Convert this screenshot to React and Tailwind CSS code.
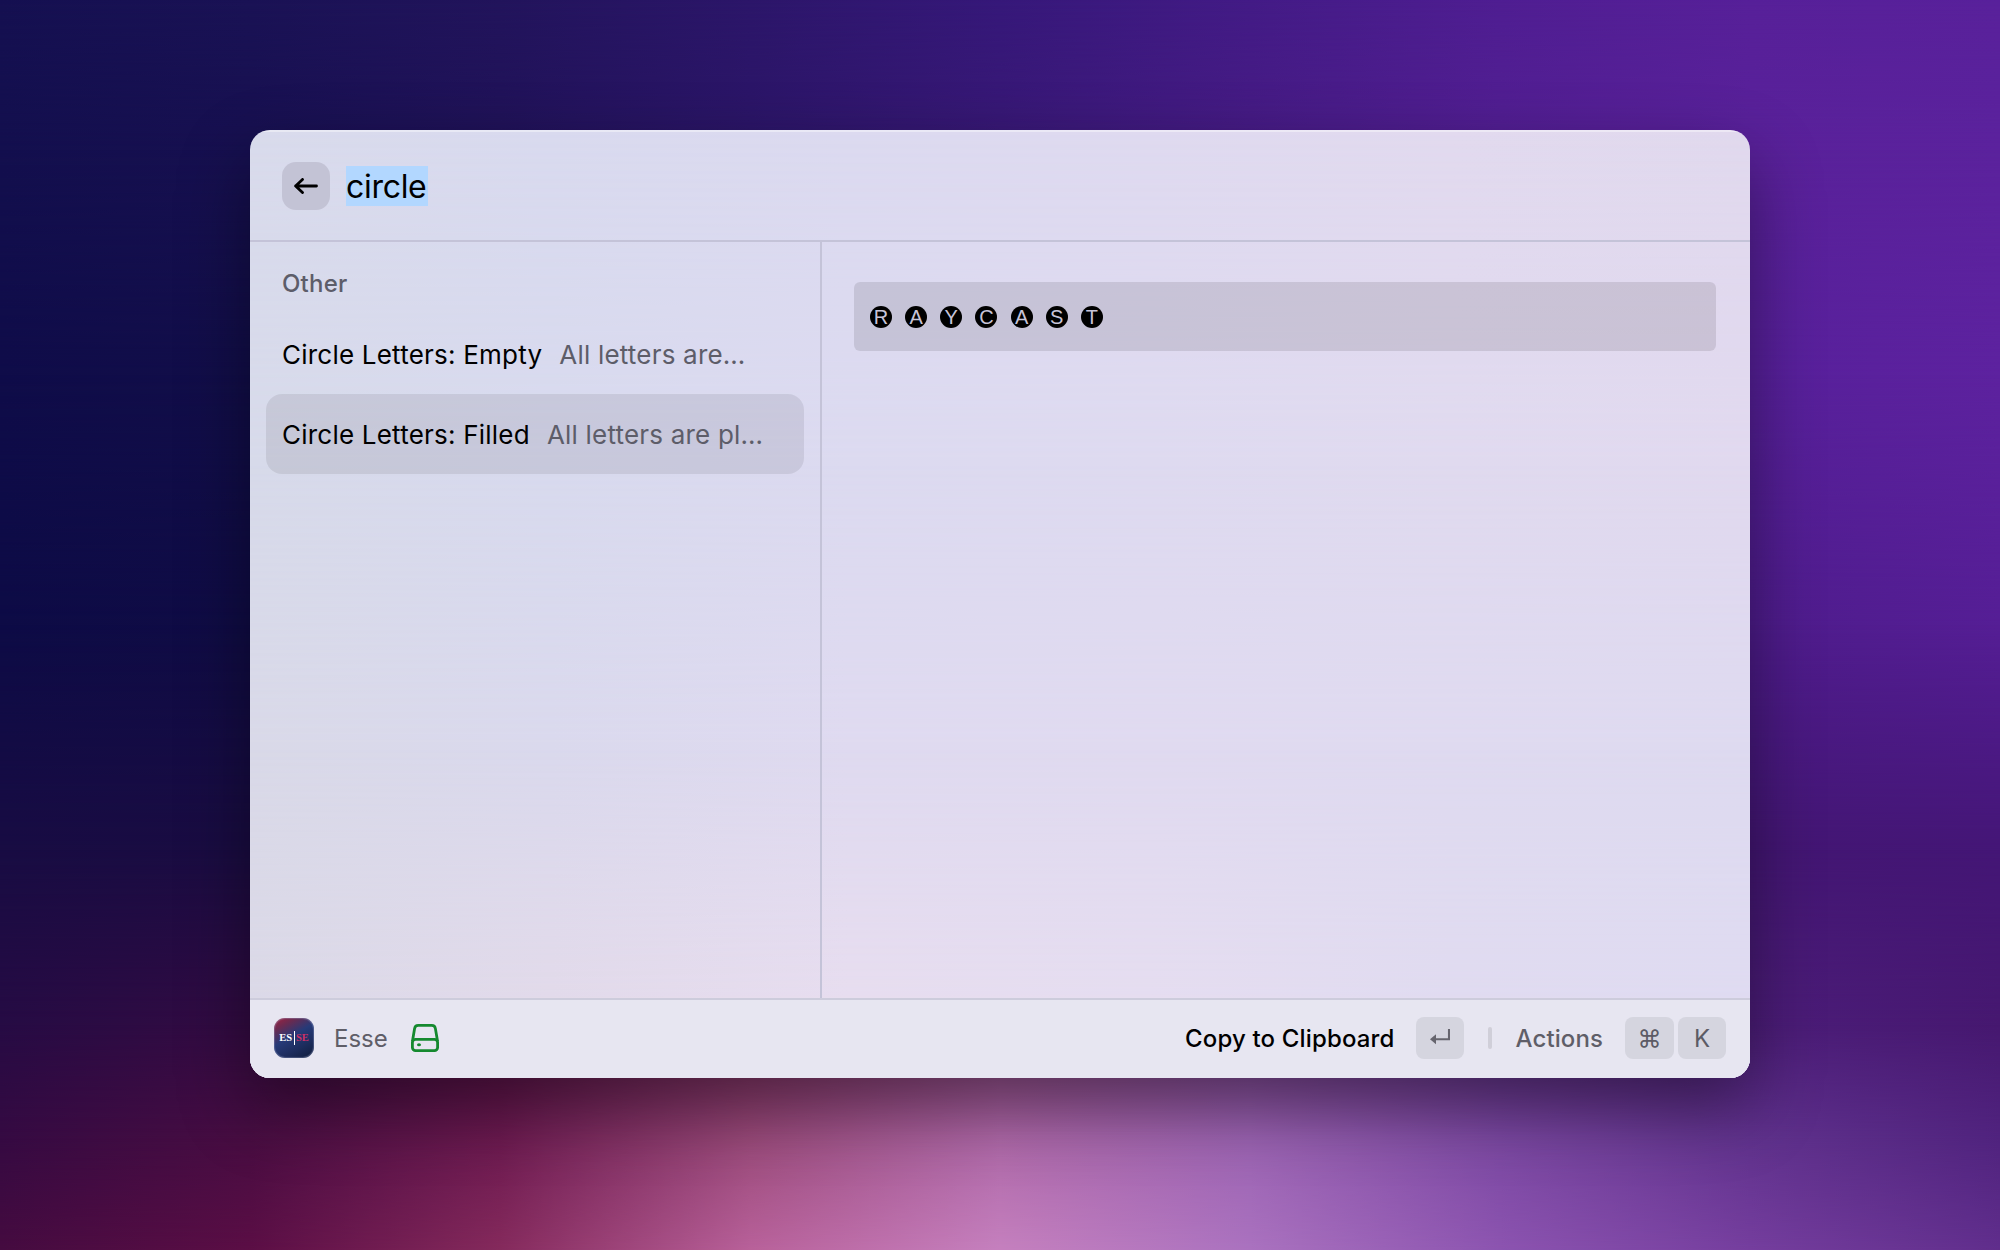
const FIELD_X = [0, 12.5, 25, 37.5, 50, 62.5, 75, 87.5, 100];

const FIELD = [
  { y: 0, c: ["#151051", "#1a1255", "#22145c", "#2c166a", "#36187a", "#431b86", "#4f1e92", "#572099", "#59219b"] },
  { y: 12, c: ["#130f4e", "#171050", "#201258", "#2b1567", "#381875", "#461b84", "#521e92", "#59219a", "#5b229d"] },
  { y: 30, c: ["#0f0c49", "#120e49", "#1b1050", "#27135f", "#36166e", "#441a7e", "#501d8d", "#57209b", "#5d229f"] },
  { y: 50, c: ["#0d0b46", "#100c45", "#180c48", "#251055", "#351464", "#3f1674", "#481980", "#4e1c8c", "#551e95"] },
  { y: 68, c: ["#180c43", "#1a0c42", "#280c45", "#3c1050", "#4a1460", "#4c1870", "#481878", "#431673", "#441676"] },
  { y: 82, c: ["#260b44", "#330b42", "#551048", "#7a2a60", "#8a4280", "#7a3f90", "#5c2a86", "#4c1d79", "#461870"] },
  { y: 91, c: ["#350a42", "#480d42", "#6c1a50", "#9a4a7a", "#ae68a8", "#9b63b2", "#7b48a2", "#60328d", "#50237e"] },
  { y: 100, c: ["#450b40", "#5b0e45", "#852a5c", "#b8619a", "#c580be", "#aa72bf", "#8c54b0", "#753e9e", "#602e8c"] },
];

const TINT_X = [0, 20, 40, 60, 80, 100];
const TINT = [
  { y: 0, c: ["#d9dbec", "#d9daef", "#dcdaf0", "#dfdaf0", "#e2daef", "#e1d9ee"] },
  { y: 35, c: ["#d7daea", "#d8daee", "#dcdaf0", "#dedaf0", "#e0daef", "#e1d9ef"] },
  { y: 65, c: ["#d9d9e8", "#dad9ed", "#dfdaf0", "#e0daf0", "#dfdaf0", "#dedaf0"] },
  { y: 92, c: ["#dbd9e7", "#e2daea", "#e7ddef", "#e5ddf0", "#e0dbf0", "#dfdbf1"] },
];

function Mesh({ xs, rows }) {
  return rows.map((row, i) => {
    const fade = i ? `linear-gradient(to bottom, transparent ${rows[i - 1].y}%, black ${row.y}%)` : "none";
    return (
      <div
        key={row.y}
        className="absolute inset-0"
        style={{
          backgroundImage: `linear-gradient(to right, ${row.c.map((c, k) => `${c} ${xs[k]}%`).join(", ")})`,
          maskImage: fade,
        }}
      />
    );
  });
}

function ArrowLeft() {
  return (
    <svg width="24" height="16" viewBox="0 0 24 16" fill="none" stroke="black" strokeWidth="2.8" strokeLinecap="round" strokeLinejoin="round">
      <path d="M22.5 8H1.6M8.5 1.4 1.6 8l6.9 6.6" />
    </svg>
  );
}

function DriveIcon() {
  return (
    <svg width="28" height="28" viewBox="0 0 28 28" fill="none" stroke="#15892f" strokeWidth="2.8" strokeLinejoin="round">
      <path d="M1.4 17.5 3.6 4.6C3.9 2.6 5.3 1.4 7.2 1.4h13.6c1.9 0 3.3 1.2 3.6 3.2l2.2 12.9" />
      <rect x="1.4" y="15.4" width="25.2" height="11.2" rx="3.2" />
      <ellipse cx="8" cy="20.7" rx="2" ry="1.5" fill="#15892f" stroke="none" />
    </svg>
  );
}

function ReturnIcon() {
  return (
    <svg width="20" height="18" viewBox="0 0 20 18">
      <path d="M19 0v10.2H4" fill="none" stroke="#66656e" strokeWidth="2.1" />
      <path d="M0 10.2 6 5.2v10Z" fill="#66656e" />
    </svg>
  );
}

function AppIcon() {
  return (
    <div className="-mt-0.5 flex size-10 items-center justify-center rounded-[11px] bg-[linear-gradient(150deg,#a3223f_0%,#6b2a50_20%,#263a78_45%,#1d2d5e_70%,#0f1c3a_100%)] font-['Liberation_Serif',serif] text-[10.5px] leading-none font-bold shadow-[inset_0_0_1px_1px_rgba(160,170,210,0.35)]">
      <span className="text-white">ES</span>
      <span className="mx-[1.5px] h-3.5 w-px bg-white" />
      <span className="text-[#cf3068]">SE</span>
    </div>
  );
}

function Key({ children }) {
  return (
    <kbd className="flex h-[42px] min-w-12 items-center justify-center rounded-lg bg-[#d5d5df] font-['Inter',sans-serif] text-2xl text-[#5c5b65]">
      {children}
    </kbd>
  );
}

function Row({ title, subtitle, selected }) {
  return (
    <li className={selected ? "flex h-20 items-center rounded-2xl bg-black/8 px-4" : "flex h-20 items-center rounded-2xl px-4"}>
      <span className="text-[26px] tracking-[0.22px] text-black">{title}</span>
      <span className="ml-[17px] text-[26px] tracking-[0.2px] text-[#5d5d69]">{subtitle}</span>
    </li>
  );
}

function CircledWord({ word }) {
  return (
    <div className="flex gap-[13.15px]">
      {word.split("").map((letter, i) => (
        <span
          key={i}
          className="flex size-[22px] items-center justify-center rounded-full bg-black font-['Liberation_Sans',sans-serif] text-[20px] leading-none text-[#c7c4d9]"
        >
          {letter}
        </span>
      ))}
    </div>
  );
}

export default function App() {
  return (
    <div className="relative isolate h-[1250px] w-[2000px] overflow-hidden px-[250px] pt-[130px] font-['Inter',sans-serif]">
      <div className="absolute inset-0 -z-10">
        <Mesh xs={FIELD_X} rows={FIELD} />
      </div>
      <main className="relative isolate flex h-[948px] w-[1500px] flex-col overflow-hidden rounded-[20px] shadow-[0_30px_70px_rgba(0,0,0,0.42)]">
        <div className="absolute inset-0 -z-10">
          <Mesh xs={TINT_X} rows={TINT} />
        </div>
        <header className="flex h-28 shrink-0 items-center border-b-2 border-[#c4c3d8] px-8 pt-0.5 shadow-[inset_0_2px_0_rgba(255,255,255,0.4)]">
          <button className="flex size-12 items-center justify-center rounded-[14px] bg-[#c3c3d5]">
            <ArrowLeft />
          </button>
          <span className="ml-4 flex h-10 w-[82px] items-center bg-[#b2d7ff] pt-px text-[32px] tracking-[-0.3px] whitespace-nowrap text-black">circle</span>
        </header>
        <div className="flex min-h-0 flex-1">
          <aside className="w-[572px] shrink-0 border-r-2 border-[#c4c3d8] px-4 pt-[26px]">
            <h2 className="px-4 text-2xl leading-8 font-medium tracking-[0.2px] text-[#5d5d69]">Other</h2>
            <ul className="mt-[14px]">
              <Row title="Circle Letters: Empty" subtitle="All letters are…" />
              <Row title="Circle Letters: Filled" subtitle="All letters are pl…" selected />
            </ul>
          </aside>
          <section className="flex-1 pt-10 pr-[34px] pl-8">
            <div className="flex h-[69px] items-center rounded-md bg-black/10 px-4">
              <CircledWord word="RAYCAST" />
            </div>
          </section>
        </div>
        <footer className="flex h-20 shrink-0 items-center border-t-2 border-[#cdccdc] bg-[#e7e6f1] px-6">
          <AppIcon />
          <span className="ml-5 text-2xl text-[#5f5e68]">Esse</span>
          <span className="ml-[23px] -mt-0.5">
            <DriveIcon />
          </span>
          <span className="ml-auto text-2xl font-medium tracking-[0.15px] text-black">Copy to Clipboard</span>
          <span className="ml-[21px] -mt-0.5">
            <Key>
              <ReturnIcon />
            </Key>
          </span>
          <span className="ml-6 -mt-0.5 h-[22px] w-1 rounded-full bg-[#d0cfd9]" />
          <span className="ml-6 text-2xl font-medium tracking-[0.1px] text-[#5f5e68]">Actions</span>
          <span className="ml-[22px] -mt-0.5 flex gap-1">
            <Key>
              <span className="w-[49px] pt-0.5 text-center">⌘</span>
            </Key>
            <Key>
              <span className="pt-0.5">K</span>
            </Key>
          </span>
        </footer>
      </main>
    </div>
  );
}
